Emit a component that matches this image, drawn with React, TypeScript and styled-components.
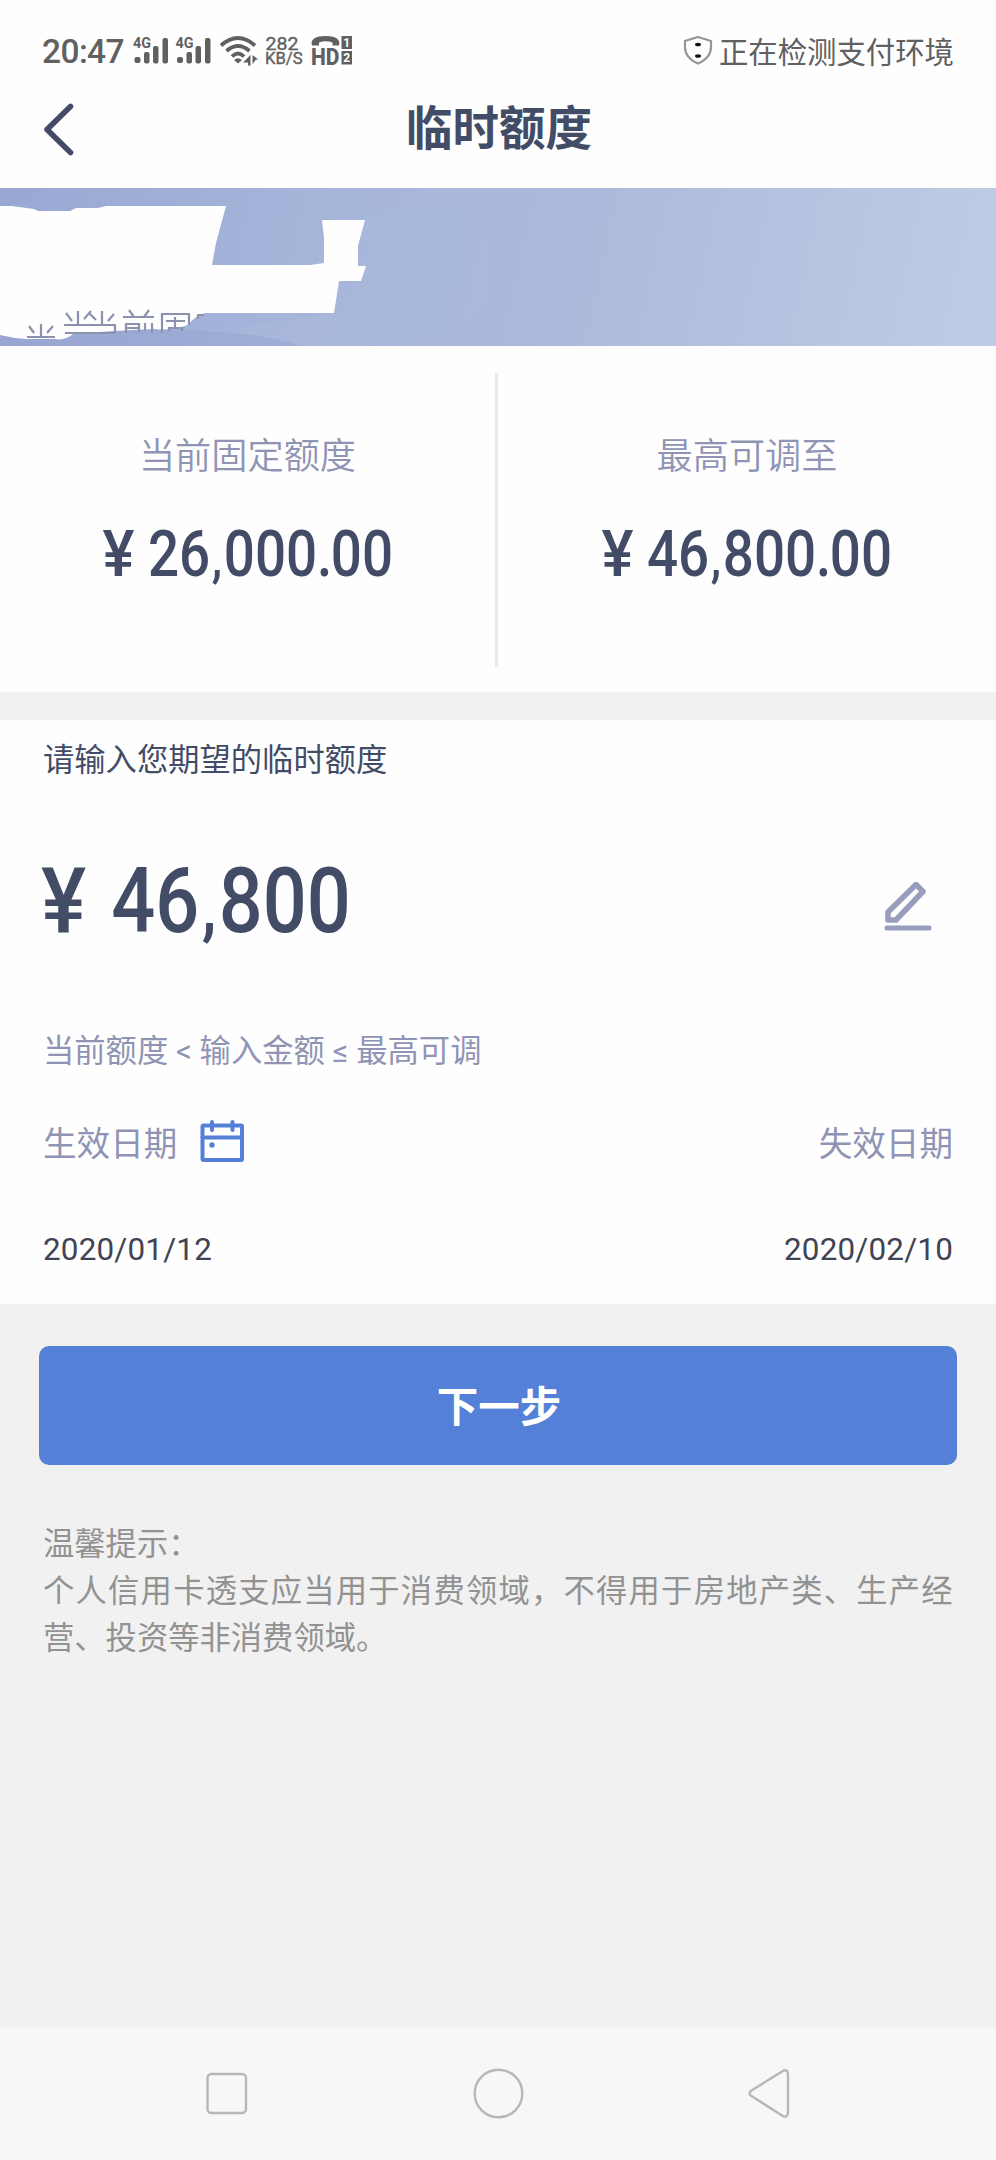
import React from "react";
import styled, { createGlobalStyle } from "styled-components";

const navy = "#434c66";
const muted = "#9094b4";
const cjk = `"Noto Sans CJK SC", sans-serif`;

const Global = createGlobalStyle`
  * { box-sizing: border-box; }
  body { margin: 0; background: #f1f1f1; font-family: Roboto, ${cjk}; }
`;

const Page = styled.main`
  width: 996px;
  height: 2160px;
  display: flex;
  flex-direction: column;
  overflow: hidden;
  background: #f1f1f1;
`;
const StatusBar = styled.div`
  height: 84px;
  flex: none;
  display: flex;
  align-items: flex-start;
  padding: 34px 42px 0 42px;
  background: #fefefe;
  color: #606060;
`;
const Clock = styled.span`
  width: 90px;
  font-size: 33.5px;
  line-height: 36px;
  font-weight: 500;
  letter-spacing: -0.6px;
  white-space: nowrap;
`;
const StatusIcons = styled.svg`
  flex: none;
  display: block;
  overflow: visible;
  text { font-family: Roboto, sans-serif; }
`;
const Checking = styled.div`
  margin: -2px 0 0 auto;
  display: flex;
  align-items: center;
  gap: 6px;
  height: 36px;
  font-size: 29.4px;
  line-height: 34px;
  white-space: nowrap;
  font-family: ${cjk};
`;
const TitleBar = styled.header`
  height: 104px;
  flex: none;
  display: grid;
  grid-template-columns: 120px 1fr 120px;
  background: #fefefe;
  color: ${navy};
`;
const BackButton = styled.button`
  border: 0;
  background: none;
  padding: 17px 0 0 42px;
  display: flex;
  align-items: flex-start;
`;
const Title = styled.h1`
  margin: 0;
  padding: 9px 0 0 2px;
  font: 700 46.5px/64px ${cjk};
  text-align: center;
`;
const Banner = styled.div`
  height: 158px;
  flex: none;
  svg { display: block; }
`;
const Limits = styled.section`
  height: 346px;
  flex: none;
  display: grid;
  grid-template-columns: 495px 501px;
  padding: 27px 0 25px;
  background: #fefefe;
`;
const LimitCell = styled.div`
  display: flex;
  flex-direction: column;
  align-items: center;
  gap: 37px;
  padding-top: 53px;
  & + & { border-left: 3px solid #e9e9eb; }
`;
const LimitLabel = styled.span`
  font: 350 36.2px/54px ${cjk};
  color: ${muted};
`;
const Amount = styled.div<{ $size: number; $squeeze: number }>`
  display: flex;
  align-items: baseline;
  font-family: Roboto, sans-serif;
  font-weight: 500;
  font-size: ${p => p.$size}px;
  line-height: 1.2;
  color: ${navy};
  white-space: nowrap;
  transform: scaleX(${p => p.$squeeze});
`;
const Currency = styled.span<{ $gap: number; $stretch: number }>`
  display: inline-block;
  transform: scaleX(${p => p.$stretch});
  transform-origin: left;
  margin-right: ${p => p.$gap}px;
`;
const Mark = styled.span<{ $scale?: number }>`
  display: inline-block;
  font-size: ${p => p.$scale ?? 1}em;
  width: ${p => 0.25 / (p.$scale ?? 1)}em;
  text-align: center;
`;
const Form = styled.section`
  height: 584px;
  flex: none;
  margin-top: 28px;
  padding: 0 43px;
  display: flex;
  flex-direction: column;
  background: #fefefe;
`;
const Prompt = styled.div`
  margin-top: 15px;
  font: 400 31.3px/46px ${cjk};
  color: ${navy};
`;
const AmountRow = styled.div`
  height: 110px;
  margin-top: 67px;
  display: flex;
  align-items: flex-start;
  justify-content: space-between;
  ${Amount} { transform-origin: left; margin-left: -2px; }
`;
const EditIcon = styled.svg`
  margin: 34px 21px 0 0;
`;
const Hint = styled.div`
  margin-top: 71px;
  font: 400 31.3px/46px Roboto, ${cjk};
  color: ${muted};
  white-space: pre;
`;
const DateRow = styled.div<{ $values?: boolean }>`
  display: flex;
  align-items: center;
  justify-content: space-between;
  margin-top: ${p => (p.$values ? 58 : 41)}px;
  height: 50px;
  font-family: ${p => (p.$values ? "Roboto, sans-serif" : cjk)};
  font-size: ${p => (p.$values ? 31.4 : 33.6)}px;
  letter-spacing: ${p => (p.$values ? 0.2 : 0)}px;
  color: ${p => (p.$values ? "#3f4353" : muted)};
`;
const DateLabel = styled.span`
  display: flex;
  align-items: center;
  gap: 23px;
`;
const NextButton = styled.button`
  flex: none;
  height: 119px;
  margin: 42px 39px 0;
  padding: 0 0 4px 2px;
  border: 0;
  border-radius: 10px;
  background: #5480d8;
  color: #fff;
  font: 700 41.5px/60px ${cjk};
`;
const Tips = styled.section`
  margin: 53px 43px 0;
  font: 400 31.3px/47px ${cjk};
  color: #929292;
  p { margin: 0; }
`;
const Justified = styled.p`
  display: flex;
  justify-content: space-between;
`;
const NavBar = styled.nav`
  height: 133px;
  flex: none;
  margin-top: auto;
  background: #f7f7f7;
  border-top: 1px solid #f3f3f3;
  display: flex;
  justify-content: space-between;
  align-items: center;
  padding: 0 204px 0 205px;
`;

function Signal({ x }: { x: number }) {
  return (
    <g transform={`translate(${x} 0)`}>
      <text x="0" y="14" fontSize="15" fontWeight="700" textLength="18" lengthAdjust="spacingAndGlyphs">4G</text>
      <rect x="1.500" y="23" width="6" height="6" rx="2" />
      <rect x="11" y="18" width="5.500" height="11.500" rx="2" />
      <rect x="20" y="12" width="5.500" height="17.500" rx="2" />
      <rect x="29.500" y="4" width="5.500" height="25.500" rx="2" />
    </g>
  );
}

function Indicators() {
  return (
    <StatusIcons width="224" height="36" viewBox="0 0 224 36" fill="#606060">
      <Signal x={1} />
      <Signal x={43.5} />
      <g fill="none" stroke="#606060" strokeWidth="3.8">
        <path d="M89 11.5Q106 -3.5 123 11.5" />
        <path d="M94.5 17Q106 7 117.500 17" />
        <path d="M100 22.500Q106 16.500 112 22.500" />
      </g>
      <path d="M102 26Q106 22.500 110 26L106 29.500Z" />
      <path d="M118.500 21V31.500H116V28.500H111ZM120.500 21L126.500 25.500H124L120.500 30Z" />
      <g stroke="#606060" strokeWidth="0.400">
        <text x="133.500" y="15.800" fontSize="19.200" textLength="33" lengthAdjust="spacingAndGlyphs">282</text>
        <text x="133" y="30" fontSize="17.400" textLength="37.500" lengthAdjust="spacingAndGlyphs">KB/S</text>
      </g>
      <path d="M180 11.500C178 5 184 2 193.500 2S209 5 207 11.500H200.500V8.500Q193.500 6 187 8.500V11.500Z" />
      <text x="179" y="30.500" fontSize="23.500" fontWeight="800" textLength="28.500" lengthAdjust="spacingAndGlyphs">HD</text>
      <rect x="209.500" y="2" width="10.500" height="13" />
      <rect x="209.500" y="17" width="10.500" height="13.500" />
      <g fill="#fff" fontSize="12" fontWeight="700">
        <text x="211.300" y="12.800">1</text>
        <text x="211.300" y="28">2</text>
      </g>
    </StatusIcons>
  );
}

function BannerArt() {
  return (
    <svg width="996" height="158" viewBox="0 0 996 158">
      <defs>
        <linearGradient id="sky" gradientUnits="userSpaceOnUse" x1="0" y1="0" x2="970" y2="210">
          <stop offset="0" stopColor="#98a8d3" />
          <stop offset="0.3" stopColor="#a5b4d9" />
          <stop offset="0.6" stopColor="#acbbdc" />
          <stop offset="1" stopColor="#bfcce5" />
        </linearGradient>
      </defs>
      <rect width="996" height="158" fill="url(#sky)" />
      <path d="M365 28Q470 8 486 50Q506 116 455 143Q405 151 365 158H300Q260 145 200 143L340 126L365 70Z" fill="#b4c0df" opacity=".18" />
      <path d="M0 147L26 151H55L73 146Q105 143 155 141Q260 143 300 158H0Z" fill="#93a3d0" opacity=".4" />
      <path d="M0 18H12L34 21L38 23H70L76 20H98L106 18H226L216 55L212 77H310L324 75V50L322 32H365L358 58V78H366L361 93H339L334 125H205Q195 128 188 137Q170 143 155 141Q105 143 73 146Q65 153 55 151L26 151L15 150L0 147Z" fill="#fefefe" />
      <g fill="none" stroke="#8d91b0" strokeWidth="2.200">
        <path d="M41 136V149M29 138L34 145M53 138L47 145M27 149H55" />
        <path d="M78 123V136M66 125L72 133M91 123L84 131M64 137H116M102 123V136M90 126L96 132M114 126L108 133M65 145H115M115 137V145" />
        <path d="M129 122L134 129M149 122L144 129M123 129H154M126 145V136H139V145M126 140H139M145 135V143M152 135V145" />
        <path d="M162 145V126H189V137M166 133H185M175 129V141M169 143V140H182V143M198 131V127H204" />
      </g>
    </svg>
  );
}

const tipChars = "个人信用卡透支应当用于消费领域，不得用于房地产类、生产经".split("");

export default function App() {
  return (
    <Page>
      <Global />
      <StatusBar>
        <Clock>20:47</Clock>
        <Indicators />
        <Checking>
          <svg width="30" height="32" viewBox="0 0 30 32">
            <path d="M15 3L28 7V13Q28 24 15 29.500Q2 24 2 13V7Z" fill="none" stroke="#969696" strokeWidth="2.200" />
            <ellipse cx="15" cy="10.500" rx="3" ry="1.800" fill="#111" />
            <ellipse cx="15" cy="22" rx="3" ry="1.800" fill="#111" />
          </svg>
          正在检测支付环境
        </Checking>
      </StatusBar>
      <TitleBar>
        <BackButton aria-label="返回">
          <svg width="34" height="56" viewBox="0 0 34 56">
            <path d="M28.500 5.500L5 28.500L28.500 51.500" fill="none" stroke={navy} strokeWidth="5.600" strokeLinecap="round" strokeLinejoin="round" />
          </svg>
        </BackButton>
        <Title>临时额度</Title>
      </TitleBar>
      <Banner><BannerArt /></Banner>
      <Limits>
        <LimitCell>
          <LimitLabel>当前固定额度</LimitLabel>
          <Amount $size={64} $squeeze={0.855}>
            <Currency $gap={19} $stretch={1.1}>¥</Currency>26<Mark $scale={0.85}>,</Mark>000<Mark>.</Mark>00
          </Amount>
        </LimitCell>
        <LimitCell>
          <LimitLabel>最高可调至</LimitLabel>
          <Amount $size={64} $squeeze={0.855}>
            <Currency $gap={19} $stretch={1.1}>¥</Currency>46<Mark $scale={0.85}>,</Mark>800<Mark>.</Mark>00
          </Amount>
        </LimitCell>
      </Limits>
      <Form>
        <Prompt>请输入您期望的临时额度</Prompt>
        <AmountRow>
          <Amount $size={90} $squeeze={0.86}>
            <Currency $gap={34} $stretch={1.1}>¥</Currency>46<Mark $scale={0.85}>,</Mark>800
          </Amount>
          <EditIcon width="48" height="50" viewBox="0 0 48 50" fill="none" stroke="#989dbe">
            <path d="M4 38V30L32 2.500L39 9.500L12 38Z" strokeWidth="5.600" strokeLinejoin="round" />
            <path d="M3 46H45" strokeWidth="5" strokeLinecap="round" />
          </EditIcon>
        </AmountRow>
        <Hint>{"当前额度 < 输入金额 ≤ 最高可调"}</Hint>
        <DateRow>
          <DateLabel>
            生效日期
            <svg width="44" height="44" viewBox="0 0 44 44" fill="none" stroke="#5480d8" strokeWidth="4">
              <rect x="2.500" y="6.500" width="39.500" height="34.500" rx="1" />
              <path d="M2.500 18.500H42M12 3V11M32.500 3V11" strokeLinecap="round" />
              <circle cx="12" cy="26" r="2.700" fill="#5480d8" stroke="none" />
            </svg>
          </DateLabel>
          <span>失效日期</span>
        </DateRow>
        <DateRow $values>
          <span>2020/01/12</span>
          <span>2020/02/10</span>
        </DateRow>
      </Form>
      <NextButton>下一步</NextButton>
      <Tips>
        <p>温馨提示：</p>
        <Justified>{tipChars.map((c, i) => <span key={i}>{c}</span>)}</Justified>
        <p>营、投资等非消费领域。</p>
      </Tips>
      <NavBar>
        <svg width="44" height="54" viewBox="0 0 44 54" fill="none" stroke="#b7b7b7" strokeWidth="2.400">
          <rect x="2.500" y="7" width="38.500" height="39" rx="4" />
        </svg>
        <svg width="54" height="54" viewBox="0 0 54 54" fill="none" stroke="#b7b7b7" strokeWidth="2.400">
          <circle cx="26.500" cy="26.500" r="23.800" />
        </svg>
        <svg width="44" height="54" viewBox="0 0 44 54" fill="none" stroke="#b7b7b7" strokeWidth="2.400">
          <path d="M34 4.500Q39.500 1 40 7V45Q39.500 52 34 48.500L3.500 29Q-0.500 26.500 3.500 23.500Z" />
        </svg>
      </NavBar>
    </Page>
  );
}
